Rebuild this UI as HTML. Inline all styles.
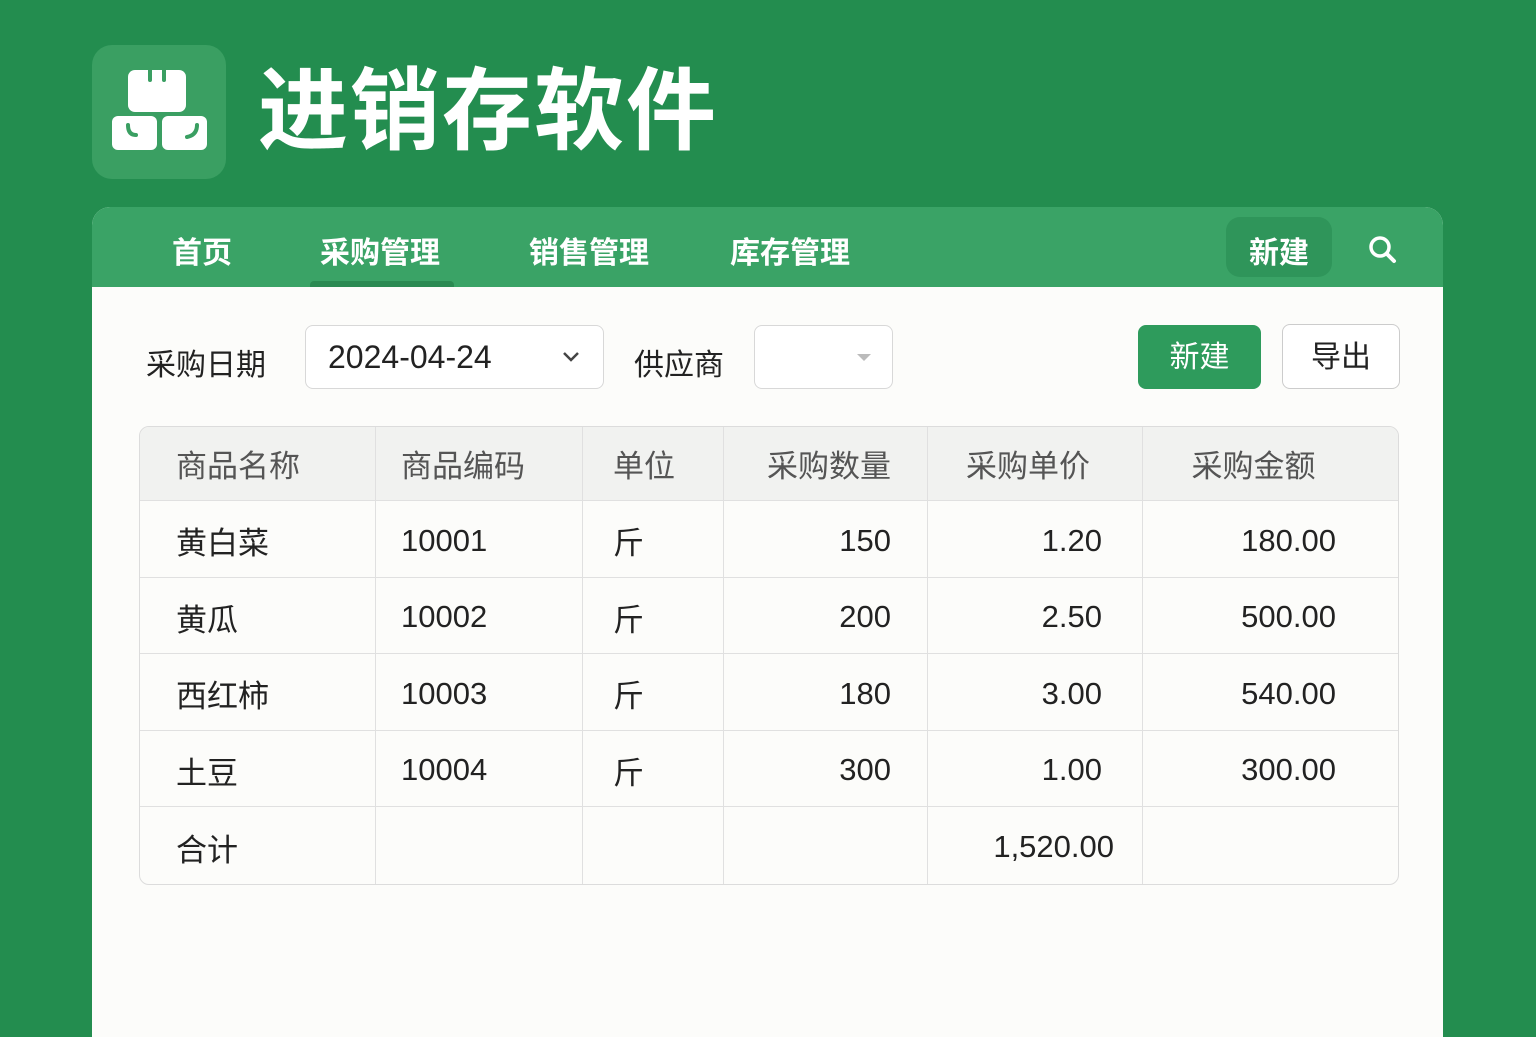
<!DOCTYPE html>
<html><head><meta charset="utf-8"><style>
*{margin:0;padding:0;box-sizing:border-box}
body{width:1536px;height:1024px;overflow:hidden;background:#238d4f;font-family:"Liberation Sans","Noto Sans CJK SC",sans-serif;position:relative}
.abs{position:absolute}
.logo{left:92px;top:45px;width:134px;height:134px;border-radius:20px;background:#3a9f62}
.title{left:258px;top:52px;font-size:90px;font-weight:bold;color:#fff;letter-spacing:2px;line-height:120px}
.panel{left:92px;top:207px;width:1351px;height:830px;background:#fcfcfa;border-radius:18px 18px 0 0;overflow:hidden}
.nav{left:0;top:0;width:1351px;height:80px;background:#3aa366}
.nav span{position:absolute;top:21px;font-size:30px;color:#fff;font-weight:bold}
.ul{left:218px;top:74px;width:144px;height:6px;background:#2b8a52;border-radius:4px 4px 0 0}
.nb{left:1134px;top:10px;width:106px;height:60px;border-radius:14px;background:#2f955a}
.lbl{font-size:30px;color:#222}
.sel{border:1px solid #d8d8d8;border-radius:8px;background:#fff}
.btn{border-radius:8px;font-size:30px;text-align:center;line-height:66px}
table{position:absolute;left:139px;top:426px;width:1260px;border-collapse:separate;border-spacing:0;border:1px solid #dcdcdc;border-radius:10px;overflow:hidden}
td,th{height:76.5px;border-right:1px solid #e0e0e0;border-bottom:1px solid #e0e0e0;font-size:31px;color:#222;font-weight:normal;padding:0 36px;padding-top:4px}
th{background:#f1f2f0;color:#555;height:74px;text-align:left;padding-top:0}
tr td:last-child,tr th:last-child{border-right:none}
tr:last-child td{border-bottom:none}
.r{text-align:right}
td:nth-child(2),th:nth-child(2){padding-left:25px}
td:nth-child(3),th:nth-child(3){padding-left:30px}
</style></head><body>
<div class="abs logo">
<svg width="134" height="134" viewBox="0 0 134 134"><g fill="#fff">
<rect x="36" y="25" width="58" height="42" rx="7"/><rect x="20" y="71" width="45" height="34" rx="6"/><rect x="70" y="71" width="45" height="34" rx="6"/></g>
<g stroke="#3a9f62" stroke-width="4" fill="none" stroke-linecap="round"><path d="M58 25v10M72 25v10"/><path d="M36 80q0 10 8 10M105 80q0 10-10 12"/></g></svg>
</div>
<div class="abs title">进销存软件</div>
<div class="abs panel">
<div class="abs nav">
<span style="left:80px">首页</span><span style="left:228px">采购管理</span><span style="left:437px">销售管理</span><span style="left:638px">库存管理</span>
<div class="abs ul"></div>
<div class="abs nb"></div><span style="left:1157px">新建</span>
<svg class="abs" style="left:1276px;top:28px" width="30" height="30" viewBox="0 0 30 30"><circle cx="12" cy="12" r="9" stroke="#fff" stroke-width="3.5" fill="none"/><path d="M19 19l7 7" stroke="#fff" stroke-width="4" stroke-linecap="round"/></svg>
</div>
<div class="abs lbl" style="left:54px;top:133px">采购日期</div>
<div class="abs sel" style="left:213px;top:118px;width:299px;height:64px"><span class="abs lbl" style="left:22px;top:13px;font-size:32px">2024-04-24</span>
<svg class="abs" style="left:256px;top:24px" width="18" height="14"><path d="M2 3l7 7 7-7" stroke="#444" stroke-width="2.5" fill="none"/></svg></div>
<div class="abs lbl" style="left:542px;top:133px">供应商</div>
<div class="abs sel" style="left:662px;top:118px;width:139px;height:64px"><svg class="abs" style="left:100px;top:26px" width="18" height="12"><path d="M2 2h14l-7 7z" fill="#bbb"/></svg></div>
<div class="abs btn" style="left:1046px;top:118px;width:123px;height:64px;background:#2e9b5c;color:#fff">新建</div>
<div class="abs btn" style="left:1190px;top:117px;width:118px;height:65px;border:1px solid #ccc;background:#fff;color:#222">导出</div>
</div>
<table>
<tr><th style="width:236px">商品名称</th><th style="width:207px">商品编码</th><th style="width:141px">单位</th><th style="width:204px" class="r">采购数量</th><th style="width:215px;text-align:center;padding-right:50px">采购单价</th><th style="text-align:center;padding-right:70px">采购金额</th></tr>
<tr><td>黄白菜</td><td>10001</td><td>斤</td><td class="r">150</td><td class="r" style="padding-right:40px">1.20</td><td class="r" style="padding-right:62px">180.00</td></tr>
<tr><td>黄瓜</td><td>10002</td><td>斤</td><td class="r">200</td><td class="r" style="padding-right:40px">2.50</td><td class="r" style="padding-right:62px">500.00</td></tr>
<tr><td>西红柿</td><td>10003</td><td>斤</td><td class="r">180</td><td class="r" style="padding-right:40px">3.00</td><td class="r" style="padding-right:62px">540.00</td></tr>
<tr><td>土豆</td><td>10004</td><td>斤</td><td class="r">300</td><td class="r" style="padding-right:40px">1.00</td><td class="r" style="padding-right:62px">300.00</td></tr>
<tr><td>合计</td><td></td><td></td><td></td><td class="r" style="padding-right:28px">1,520.00</td><td></td></tr>
</table>
</body></html>
